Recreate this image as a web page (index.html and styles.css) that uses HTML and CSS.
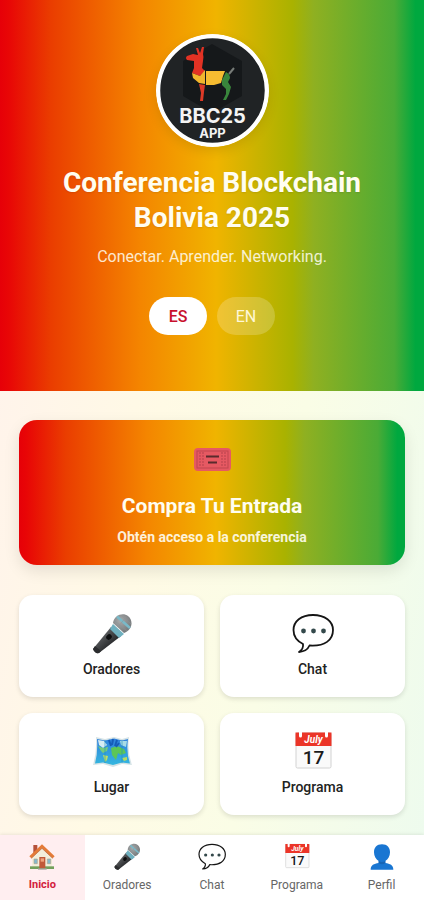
FILE: index.html
```html
<!DOCTYPE html>
<html lang="es">
<head>
    <meta charset="UTF-8">
    <meta name="viewport" content="width=device-width, initial-scale=1.0">
    <title>Conferencia Blockchain Bolivia 2025</title>
    <link rel="stylesheet" href="styles.css">
</head>
<body>
    <!-- Shared icons -->
    <svg class="sprite" aria-hidden="true">
        <defs>
            <linearGradient id="handleFill" x1="0" y1="0" x2="1" y2="1">
                <stop offset="0.3" stop-color="#5d5f61"/>
                <stop offset="0.7" stop-color="#242628"/>
            </linearGradient>
            <radialGradient id="headFill" cx="0.4" cy="0.35" r="0.7">
                <stop offset="0" stop-color="#a9abac"/>
                <stop offset="1" stop-color="#717577"/>
            </radialGradient>
            <linearGradient id="seaFill" x1="0" y1="0" x2="0" y2="1">
                <stop offset="0" stop-color="#2f7fdc"/>
                <stop offset="1" stop-color="#35b7df"/>
            </linearGradient>
        </defs>
        <symbol id="icon-mic" viewBox="0 0 42 42">
            <path d="M20 14 30 23 8 40Q4 41 2 36Z" fill="url(#handleFill)"/>
            <path d="M2 36 4 33 10 38 8 40Q4 41 2 36Z" fill="#2b2c2e"/>
            <path d="M22 11 33 21 28 25 19 16Z" fill="#6fb0bf"/>
            <path d="M22 10C23 2 32-1 37 3C43 8 41 17 33 20Z" fill="url(#headFill)"/>
            <path d="M26 3.500 39 15" stroke="#79b9c8" stroke-width="2.500"/>
            <path d="M30 2 40 11M24 8 36 18M35 4 27 14" stroke="#8f9495" stroke-width="0.600"/>
            <ellipse cx="18" cy="24" rx="2.500" ry="3" fill="#0c0d0e" transform="rotate(45 18 24)"/>
        </symbol>
        <symbol id="icon-chat" viewBox="0 0 42 42">
            <path d="M21 2C9 2 1.500 8.500 1.500 17C1.500 24 6 28.500 11 31C11.500 34 10 37 7 39C13 38.500 16 36 17.500 32.500C33 33.500 41 27 41 17C41 8.500 33 2 21 2Z" fill="#fff" stroke="#151515" stroke-width="1.800" stroke-linejoin="round"/>
            <g fill="#34494b">
                <circle cx="11.500" cy="18" r="2.400"/>
                <circle cx="21.500" cy="18" r="2.400"/>
                <circle cx="31.500" cy="18" r="2.400"/>
            </g>
        </symbol>
        <symbol id="icon-home" viewBox="0 0 42 42">
            <path d="M8 3H14V15H8Z" fill="#b5513a"/>
            <path d="M6 19 21 6 36 19V38H6Z" fill="#f3eedb"/>
            <path d="M3 35H39V39H3Z" fill="#72a05b"/>
            <path d="M21 2 40 20 37 23 21 8 5 23 2 20Z" fill="#e47b38"/>
            <path d="M5 23 21 8 37 23" fill="none" stroke="#b65a32"/>
            <rect x="17" y="21" width="9" height="17" fill="#c0593a"/>
            <path d="M19 23H24V28H19Z" fill="#efa27c"/>
            <path d="M9 24H14V31H9ZM29 24H34V31H29Z" fill="#83b9cb" stroke="#b1a58e"/>
            <path d="M15 38H28V40H15Z" fill="#a5a29d"/>
        </symbol>
    </svg>

    <header class="header">
        <svg class="logo" viewBox="0 0 113 113" role="img" aria-label="BBC25 APP">
            <circle cx="56.500" cy="56.500" r="54.500" fill="#202325" stroke="#fff" stroke-width="4.500"/>
            <path d="M56 10 86 27V62L56 79 27 62V27Z" fill="#15181a"/>
            <!-- Llama -->
            <path d="M42 21 40 14 42 14 44 19 46 13 48 13 47 20Q48 23 47 27L46 34 49 37 44 42 36 39 38 34V27L31 26Q29 24 31 22L37 20Z" fill="#e33224"/>
            <path d="M36 39 44 42 49 36V50L43 49 37 44Z" fill="#f2b62d"/>
            <path d="M43 50 49 51 48 58 47 67 44 67 45 59Z" fill="#dd3a27"/>
            <path d="M50 37 69 37 67 42 65 49 58 51 50 51Z" fill="#f6bc31"/>
            <path d="M70 38Q74 40 74 44L72 48 75 53 73 60 70 66 67 66 70 60 70 55 66 51 66 46Z" fill="#39863c"/>
            <path d="M73 40 78 34" stroke="#777c78" stroke-width="2"/>
            <text x="56.500" y="89" class="logo-name">BBC25</text>
            <text x="56.500" y="104" class="logo-sub">APP</text>
        </svg>
        <h1>Conferencia Blockchain Bolivia 2025</h1>
        <p>Conectar. Aprender. Networking.</p>
        <div class="lang-switch">
            <button type="button" class="lang-btn active">ES</button>
            <button type="button" class="lang-btn">EN</button>
        </div>
    </header>

    <main class="main-content">
        <a href="#entrada" class="ticket-card">
            <svg class="ticket-icon" viewBox="0 0 42 40" aria-hidden="true">
                <rect x="3" y="8" width="37" height="23" rx="4" fill="#e65962"/>
                <rect x="6" y="11" width="31" height="17" fill="none" stroke="#c0464f"/>
                <path d="M9 12V27M12 12V27M31 12V27M34 12V27" stroke="#b5434c" stroke-dasharray="2 1"/>
                <path d="M15 16.500H28M17 22.500H26" stroke="#592b2c" stroke-width="2"/>
            </svg>
            <h2>Compra Tu Entrada</h2>
            <p>Obtén acceso a la conferencia</p>
        </a>

        <div class="card-grid">
            <a href="#oradores" class="card">
                <svg class="card-icon" aria-hidden="true"><use href="#icon-mic"/></svg>
                <span>Oradores</span>
            </a>
            <a href="#chat" class="card">
                <svg class="card-icon" aria-hidden="true"><use href="#icon-chat"/></svg>
                <span>Chat</span>
            </a>
            <a href="#lugar" class="card">
                <svg class="card-icon" viewBox="0 0 42 42" aria-hidden="true">
                    <path d="M5 6 14 8 23 6 31 8 38 6Q36 21 41 34L31 33 22 36 12 33 2 34Q6 21 5 6Z" fill="#d5e3e6"/>
                    <path d="M6 8 14 9.500 23 7.500 31 9.500 37 8Q35 21 39 32.500L31 31.500 22 34 12 31.500 4 32.500Q7 21 6 8Z" fill="url(#seaFill)"/>
                    <path d="M7 9 13 10 16 14 12 17 8 14Z" fill="#d6ecf3"/>
                    <path d="M7 15 12 17 17 16 16 20 12 22 10 20Z" fill="#75cb7c"/>
                    <path d="M12 24 17 25 16 29 14 31Z" fill="#c0df62"/>
                    <path d="M20 17 26 15 33 18 35 22 30 24 27 22 25 29 21 24Z" fill="#5cc657"/>
                    <path d="M29 10 36 10 35 16 30 14Z" fill="#a9dbe6"/>
                    <path d="M18 9 20 15M22 8 21 14M26 9 24 15M28 12 25 16" stroke="#165cb8" stroke-width="2"/>
                    <path d="M31 27 36 26 36 29 33 30Z" fill="#b7dc60"/>
                    <path d="M14 9V32M31 9V32" stroke="#2391bb" stroke-width="0.600"/>
                </svg>
                <span>Lugar</span>
            </a>
            <a href="#programa" class="card">
                <svg class="card-icon" viewBox="0 0 42 42" aria-hidden="true">
                    <rect x="4" y="2" width="35" height="35" rx="1.500" fill="#fafafa" stroke="#d2d2d2"/>
                    <path d="M3.500 1.500H39.500V15H3.500Z" fill="#eb3528"/>
                    <path d="M8.500 1V5M34.500 1V5" stroke="#fff" stroke-width="3" stroke-linecap="round"/>
                    <text x="21.500" y="12" class="cal-month">July</text>
                    <text x="21.500" y="33" class="cal-day">17</text>
                </svg>
                <span>Programa</span>
            </a>
        </div>
    </main>

    <nav class="bottom-nav">
        <a href="#inicio" class="nav-item active">
            <svg class="nav-icon" aria-hidden="true"><use href="#icon-home"/></svg>
            <span>Inicio</span>
        </a>
        <a href="#oradores" class="nav-item">
            <svg class="nav-icon" aria-hidden="true"><use href="#icon-mic"/></svg>
            <span>Oradores</span>
        </a>
        <a href="#chat" class="nav-item">
            <svg class="nav-icon" aria-hidden="true"><use href="#icon-chat"/></svg>
            <span>Chat</span>
        </a>
        <a href="#programa" class="nav-item">
            <svg class="nav-icon" viewBox="0 0 42 42" aria-hidden="true">
                <rect x="4" y="2" width="35" height="35" rx="1.500" fill="#fafafa" stroke="#d2d2d2"/>
                <path d="M3.500 1.500H39.500V15H3.500Z" fill="#eb3528"/>
                <path d="M8.500 1V5M34.500 1V5" stroke="#fff" stroke-width="3" stroke-linecap="round"/>
                <text x="21.500" y="12" class="cal-month">July</text>
                <text x="21.500" y="33" class="cal-day">17</text>
            </svg>
            <span>Programa</span>
        </a>
        <a href="#perfil" class="nav-item">
            <svg class="nav-icon" viewBox="0 0 42 42" aria-hidden="true">
                <path d="M21 2C13 2 9 7 9 14C9 20 12 25 16 27V30C9 31 4 33 4 40H38C38 33 33 31 26 30V27C30 25 33 20 33 14C33 7 29 2 21 2Z" fill="#1976d2"/>
                <path d="M16 27Q21 30 26 27V30Q21 34 16 30Z" fill="#1565b6"/>
            </svg>
            <span>Perfil</span>
        </a>
    </nav>
</body>
</html>
```
FILE: styles.css
```css
:root {
    --flag: linear-gradient(90deg, #e60008 0%, #e80606 2%, #ea3d00 12%, #f48500 33%, #f0b400 51%, #a9b200 69%, #8fb021 74%, #4aab36 93%, #00a83f 98%);
}

* {
    margin: 0;
    padding: 0;
    box-sizing: border-box;
}

body {
    font-family: Roboto, sans-serif;
    background: linear-gradient(100deg, #fff1ed 0%, #fffae5 40%, #fafde6 65%, #edfbee 100%);
    color: #222;
    min-height: 100vh;
    display: flex;
    flex-direction: column;
}

a {
    color: inherit;
    text-decoration: none;
}

.sprite {
    position: absolute;
    width: 0;
    height: 0;
}

.header {
    background: var(--flag);
    color: #fffdf0;
    padding: 34px 20px 56px;
    display: flex;
    flex-direction: column;
    align-items: center;
    text-align: center;
}

.logo {
    width: 113px;
    height: 113px;
    border-radius: 50%;
    box-shadow: 0 4px 12px rgba(0, 0, 0, 0.1);
    margin-bottom: 18px;
}

.logo-name,
.logo-sub {
    font-family: Inter, sans-serif;
    font-weight: 700;
    fill: #f4f4f4;
    text-anchor: middle;
}

.logo-name {
    font-size: 20px;
}

.logo-sub {
    font-size: 13px;
}

.header h1 {
    font-size: 28px;
    font-weight: 700;
    line-height: 35px;
    max-width: 340px;
    margin-bottom: 10px;
    text-shadow: 0 1px 2px rgba(0, 0, 0, 0.1);
}

.header p {
    font-size: 16px;
    line-height: 24px;
    opacity: 0.85;
    margin-bottom: 28px;
}

.lang-switch {
    display: flex;
    gap: 10px;
}

.lang-btn {
    width: 58px;
    height: 38px;
    border: none;
    border-radius: 19px;
    background: rgba(255, 255, 255, 0.2);
    color: #fff8d8;
    font-family: inherit;
    font-size: 16px;
    font-weight: 400;
    cursor: pointer;
}

.lang-btn.active {
    background: #fff;
    color: #c8102e;
    font-weight: 500;
}

.main-content {
    flex: 1;
    padding: 29px 19px 20px;
}

.ticket-card {
    display: flex;
    flex-direction: column;
    align-items: center;
    background: var(--flag);
    border-radius: 18px;
    color: #fffdf0;
    padding: 20px 20px 18px;
    margin-bottom: 30px;
    text-align: center;
    box-shadow: 0 6px 16px rgba(0, 0, 0, 0.1);
}

.ticket-icon {
    width: 42px;
    height: 40px;
    margin-bottom: 12px;
}

.ticket-card h2 {
    font-size: 21px;
    font-weight: 700;
    line-height: 28px;
    margin-bottom: 7px;
}

.ticket-card p {
    font-size: 14px;
    font-weight: 700;
    line-height: 20px;
    opacity: 0.9;
}

.card-grid {
    display: grid;
    grid-template-columns: 1fr 1fr;
    gap: 16px;
}

.card {
    display: flex;
    flex-direction: column;
    align-items: center;
    gap: 4px;
    background: #fff;
    border-radius: 14px;
    padding: 18px 12px;
    font-size: 14px;
    font-weight: 500;
    line-height: 20px;
    box-shadow: 0 2px 5px rgba(0, 0, 0, 0.12);
}

.card-icon {
    width: 42px;
    height: 42px;
}

.cal-month {
    font-size: 10px;
    font-style: italic;
    font-weight: 700;
    fill: #fff;
    text-anchor: middle;
}

.cal-day {
    font-size: 19px;
    font-weight: 500;
    fill: #1b1b1b;
    text-anchor: middle;
}

.bottom-nav {
    position: sticky;
    bottom: 0;
    display: flex;
    background: #fff;
    box-shadow: 0 -1px 3px rgba(0, 0, 0, 0.08);
}

.nav-item {
    flex: 1;
    display: flex;
    flex-direction: column;
    align-items: center;
    gap: 6px;
    padding: 8px 0 7px;
    color: #666;
    font-size: 12px;
    font-weight: 400;
    line-height: 16px;
}

.nav-item.active {
    background: #ffeef0;
    color: #d3203c;
    font-size: 11px;
    font-weight: 700;
}

.nav-icon {
    width: 28px;
    height: 28px;
}
```
